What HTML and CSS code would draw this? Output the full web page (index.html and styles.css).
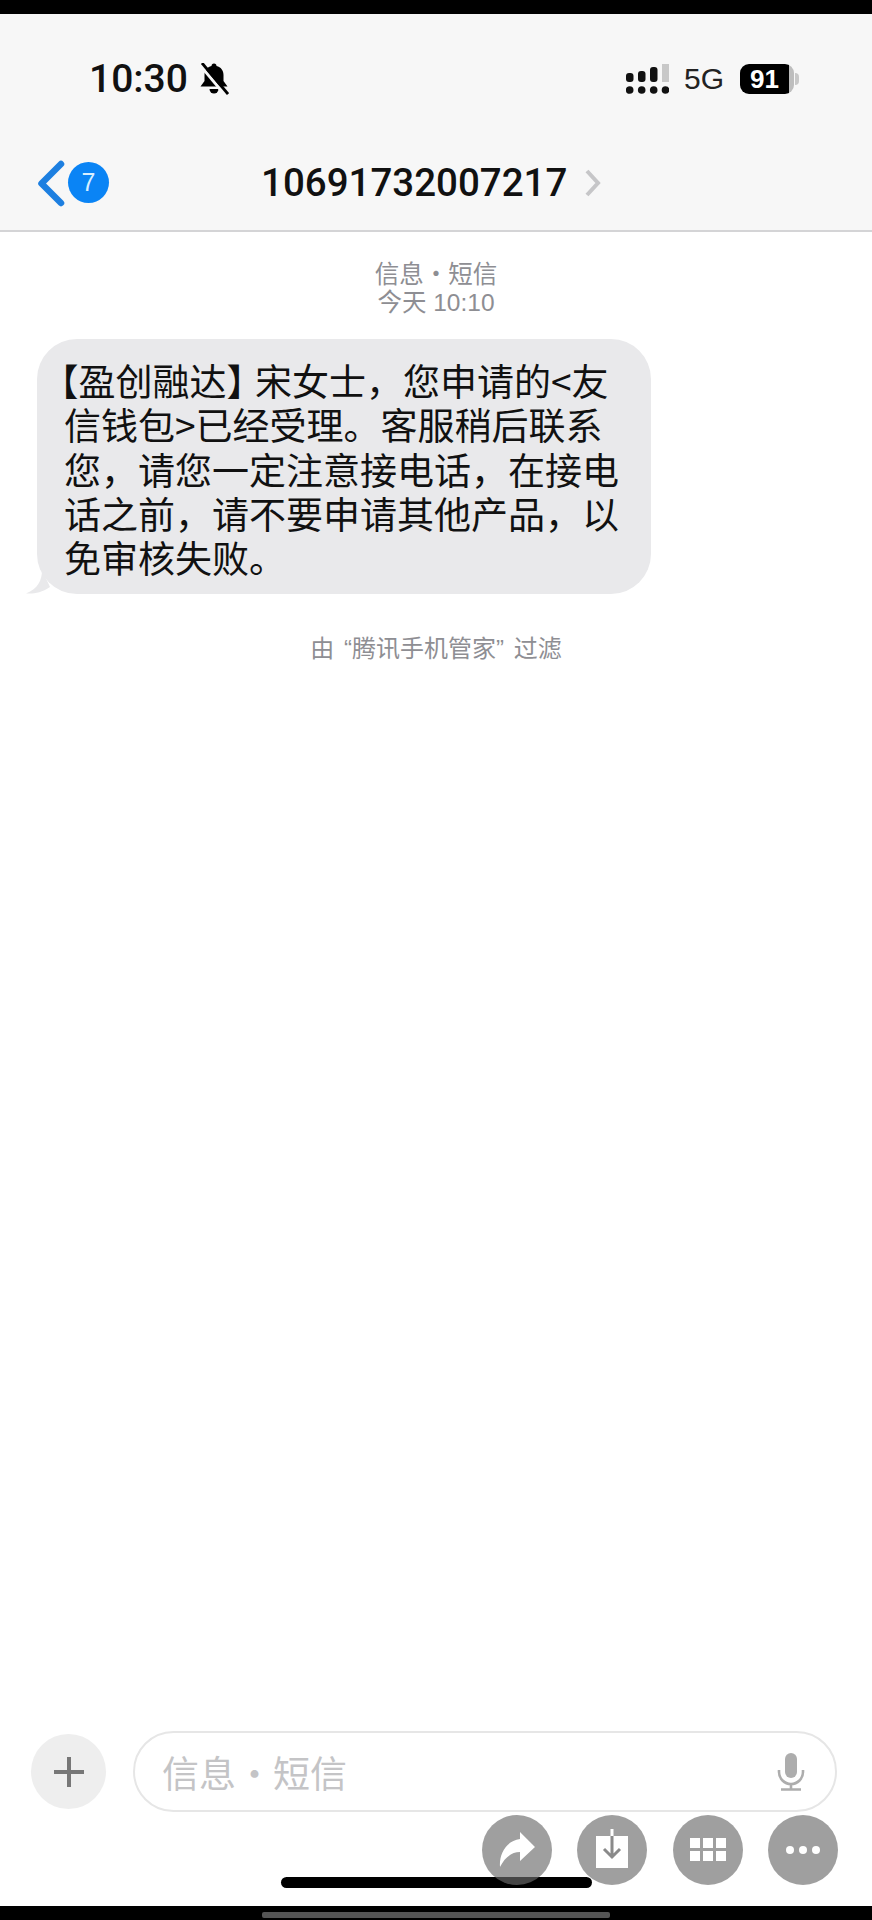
FILE: index.html
```html
<!DOCTYPE html>
<html lang="zh-CN">
<head>
<meta charset="utf-8">
<title>信息</title>
<link rel="stylesheet" href="styles.css">
</head>
<body>
<div class="screen">
  <div class="edge-top"></div>
  <header class="header">
    <div class="status">
      <div class="status-left">
        <span class="time">10:30</span>
        <svg class="bell" viewBox="0 0 30 32" width="30" height="32">
          <path d="M12.500 3a2.500 2.500 0 0 1 5 0c4.500 1 7 4.500 7 9v6l4 5.500H1.500l4-5.500v-6c0-4.500 2.500-8 7-9z" fill="#000"/>
          <path d="M10.500 26h9a4.500 4.500 0 0 1-9 0z" fill="#000"/>
          <path d="M0 1l26 31" stroke="#f7f7f7" stroke-width="3"/>
          <path d="M3 0l26 31" stroke="#000" stroke-width="2.800"/>
        </svg>
      </div>
      <div class="status-right">
        <svg class="signal" viewBox="0 0 43 30" width="43" height="30">
          <rect x="0" y="9" width="7.500" height="9" rx="3" fill="#111"/>
          <rect x="12" y="7" width="7.500" height="11" rx="3" fill="#111"/>
          <rect x="24" y="3" width="7.500" height="15" rx="3" fill="#111"/>
          <rect x="36" y="0" width="7" height="18" fill="#c8c8c8"/>
          <circle cx="3.700" cy="26" r="3.800" fill="#111"/>
          <circle cx="15.700" cy="26" r="3.800" fill="#111"/>
          <circle cx="27.700" cy="26" r="3.800" fill="#111"/>
          <circle cx="39.500" cy="26" r="3.800" fill="#111"/>
        </svg>
        <span class="net">5G</span>
        <div class="battery"><span class="battery-level">91</span></div>
        <span class="battery-nub"></span>
      </div>
    </div>
    <nav class="nav">
      <div class="back">
        <svg class="back-chevron" viewBox="0 0 28 47" width="28" height="47">
          <path d="M24 4L4.500 23.500 24 43" fill="none" stroke="#1d7fe0" stroke-width="6.500" stroke-linecap="round" stroke-linejoin="round"/>
        </svg>
        <span class="badge">7</span>
      </div>
      <h1 class="title">10691732007217</h1>
      <svg class="title-chevron" viewBox="0 0 18 28" width="18" height="28">
        <path d="M4 2l11 12L4 26" fill="none" stroke="#c6c6c8" stroke-width="4"/>
      </svg>
    </nav>
  </header>
  <main class="thread">
    <div class="meta">信息・短信<br>今天 10:10</div>
    <div class="bubble">
      <svg class="tail" viewBox="0 0 24 24" width="24" height="24">
        <path d="M16 0C16 10 12 19 0 23.500 8 24 15 23 24 17z" fill="#e9e9eb"/>
      </svg>
      <p class="bubble-text"><span class="mark-open">【</span>盈创融达<span class="mark-close">】</span>宋女士，您申请的&lt;友信钱包&gt;已经受理。客服稍后联系您，请您一定注意接电话，在接电话之前，请不要申请其他产品，以免审核失败。</p>
    </div>
    <div class="filter-note">由 “腾讯手机管家” 过滤</div>
  </main>
  <div class="composer">
    <button class="plus" type="button" aria-label="添加">
      <svg viewBox="0 0 30 30" width="30" height="30">
        <path d="M15 0v30M0 15h30" stroke="#777" stroke-width="4"/>
      </svg>
    </button>
    <div class="input">
      <span class="placeholder">信息・短信</span>
      <svg class="mic" viewBox="0 0 28 38" width="28" height="38">
        <rect x="8" y="0" width="12" height="25" rx="6" fill="#adadad"/>
        <path d="M2 17v2a12 12 0 0 0 24 0v-2M14 31v5M4 36.500h20" fill="none" stroke="#adadad" stroke-width="2.600"/>
      </svg>
    </div>
  </div>
  <div class="home-row"><span class="home-bar"></span></div>
  <div class="edge-bottom"><span class="edge-bar"></span></div>
  <div class="fabs">
    <span class="fab">
      <svg viewBox="0 0 70 70" width="70" height="70">
        <path d="M38 17l15 15-15 14v-9c-8 0-15 5-20 15-1-13 6-26 20-28z" fill="#fff"/>
      </svg>
    </span>
    <span class="fab">
      <svg viewBox="0 0 70 70" width="70" height="70">
        <rect x="19" y="21" width="32" height="32" fill="#fff"/>
        <path d="M35 14v7" stroke="#fff" stroke-width="3"/>
        <path d="M35 21v21M27 34l8 8 8-8" fill="none" stroke="#8a8a8a" stroke-width="3"/>
      </svg>
    </span>
    <span class="fab">
      <svg viewBox="0 0 70 70" width="70" height="70">
        <path d="M17 23h10v10H17zM30 23h10v10H30zM43 23h10v10H43zM17 36h10v10H17zM30 36h10v10H30zM43 36h10v10H43z" fill="#fff"/>
      </svg>
    </span>
    <span class="fab">
      <svg viewBox="0 0 70 70" width="70" height="70">
        <circle cx="22" cy="35" r="4" fill="#fff"/>
        <circle cx="35" cy="35" r="4" fill="#fff"/>
        <circle cx="48" cy="35" r="4" fill="#fff"/>
      </svg>
    </span>
  </div>
</div>
</body>
</html>
```
FILE: styles.css
```css
* { box-sizing: border-box; }
html, body { margin: 0; padding: 0; background: #fff; }
body { font-family: "Liberation Sans", "Noto Sans CJK SC", sans-serif; }
svg { display: block; flex: none; }

.screen {
  position: relative;
  width: 872px;
  height: 1920px;
  display: flex;
  flex-direction: column;
  overflow: hidden;
}
.edge-top { height: 14px; background: #000; flex: none; }

.header {
  height: 218px;
  flex: none;
  background: #f7f7f7;
  border-bottom: 2px solid #d4d4d6;
  padding-top: 47px;
}
.status {
  height: 36px;
  display: flex;
  justify-content: space-between;
  align-items: center;
  padding: 0 73px 0 89px;
}
.status-left { display: flex; align-items: center; gap: 11px; }
.time {
  font-family: Roboto, "Liberation Sans", sans-serif;
  font-size: 39px;
  font-weight: 500;
  color: #111;
  line-height: 36px;
}
.status-right { display: flex; align-items: center; }
.net {
  font-family: "Liberation Sans", sans-serif;
  font-size: 30px;
  color: #222;
  margin: 0 16px 0 15px;
  line-height: 36px;
}
.battery {
  width: 54px;
  height: 30px;
  border-radius: 9px;
  background: linear-gradient(90deg, #000 0 91%, #bdbdbd 91% 100%);
  display: flex;
  align-items: center;
  justify-content: center;
  padding-right: 5px;
}
.battery-level {
  font-family: "Liberation Sans", sans-serif;
  font-size: 26px;
  font-weight: 700;
  color: #fff;
  line-height: 30px;
}
.battery-nub {
  width: 4px;
  height: 12px;
  margin-left: 1px;
  border-radius: 0 4px 4px 0;
  background: #c8c8c8;
}

.nav {
  display: flex;
  align-items: center;
  height: 50px;
  margin-top: 61px;
  padding-left: 37px;
}
.back { display: flex; align-items: center; width: 224px; gap: 3px; }
.badge {
  width: 41px;
  height: 41px;
  border-radius: 50%;
  background: #0a84f5;
  color: #d8efff;
  font-size: 25px;
  line-height: 41px;
  text-align: center;
  margin-top: -2px;
}
.title {
  margin: 0;
  font-family: Roboto, "Liberation Sans", sans-serif;
  font-size: 38.500px;
  font-weight: 500;
  color: #111;
  line-height: 50px;
}
.title-chevron { margin-left: 16px; }

.thread { flex: 1; padding-top: 29px; min-height: 0; }
.meta {
  text-align: center;
  font-size: 24.500px;
  line-height: 28px;
  color: #8e8e93;
}
.bubble {
  position: relative;
  width: 614px;
  height: 255px;
  margin: 22px 0 0 37px;
  padding: 19px 26px 0 27px;
  border-radius: 40px;
  background: #e9e9eb;
}
.tail { position: absolute; left: -11px; bottom: 0; }
.bubble-text {
  margin: 0;
  font-family: "Noto Sans CJK SC", sans-serif;
  font-size: 37px;
  line-height: 44.300px;
  color: #111;
}
.mark-open { font-feature-settings: "halt"; margin-left: -4px; }
.mark-close { font-feature-settings: "halt"; margin-right: 10px; }
.filter-note {
  margin-top: 40px;
  text-align: center;
  font-size: 24px;
  line-height: 30px;
  word-spacing: 3px;
  color: #8e8e93;
}

.composer {
  flex: none;
  display: flex;
  align-items: center;
  gap: 27px;
  padding: 0 35px 0 31px;
  height: 81px;
}
.plus {
  width: 75px;
  height: 75px;
  flex: none;
  padding: 0;
  border: 0;
  border-radius: 50%;
  background: #eee;
  display: flex;
  align-items: center;
  justify-content: center;
}
.input {
  flex: 1;
  height: 81px;
  border: 2px solid #e6e6e6;
  border-radius: 41px;
  display: flex;
  align-items: center;
  justify-content: space-between;
  padding: 0 30px 0 27px;
}
.placeholder {
  font-size: 37px;
  color: #c4c4c6;
}

.home-row {
  flex: none;
  height: 94px;
  padding: 65px 0 0 281px;
}
.home-bar {
  display: block;
  width: 311px;
  height: 11px;
  border-radius: 6px;
  background: #000;
}
.edge-bottom {
  flex: none;
  height: 14px;
  background: #000;
  padding: 6px 0 0 262px;
}
.edge-bar {
  display: block;
  width: 348px;
  height: 6px;
  border-radius: 2px;
  background: #555;
}

.fabs {
  position: absolute;
  right: 34px;
  bottom: 35px;
  display: flex;
  gap: 25.500px;
}
.fab {
  width: 70px;
  height: 70px;
  border-radius: 50%;
  background: rgba(108, 108, 108, 0.65);
}
```
